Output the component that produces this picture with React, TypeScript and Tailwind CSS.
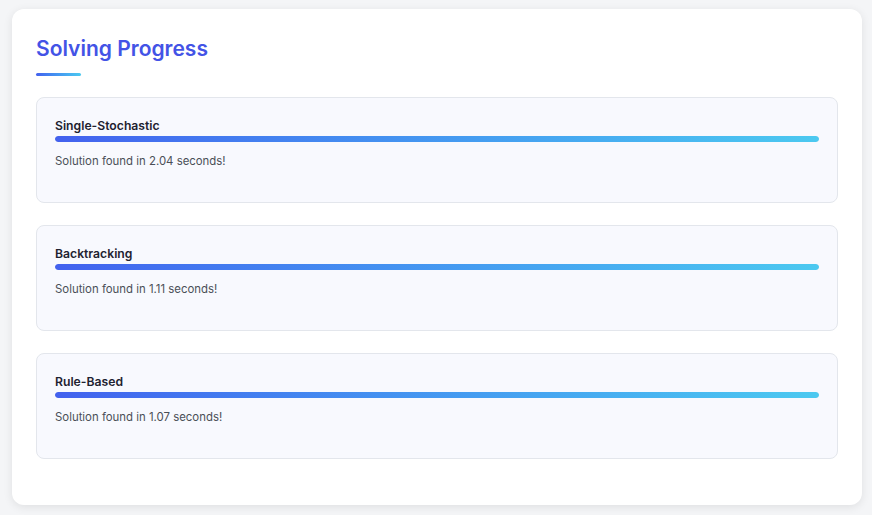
const RESULTS = [
  { name: "Single-Stochastic", time: "2.04" },
  { name: "Backtracking", time: "1.11" },
  { name: "Rule-Based", time: "1.07" },
];

function ResultBox({ name, time }: { name: string; time: string }) {
  return (
    <div className="h-[106px] mb-[22px] rounded-lg border border-[#e3e6ec] bg-[#f8f9fe] px-[18px] pt-[19px]">
      <h3 className="text-[12.2px] leading-[18px] font-semibold text-[#1e2230]">{name}</h3>
      <div className="mt-px h-[6px] w-full rounded-full bg-[#e9ecef] overflow-hidden">
        <div
          className="h-full rounded-full bg-gradient-to-r from-[#4361ee] to-[#4cc9f0]"
          style={{ width: "100%" }}
        />
      </div>
      <p className="mt-[10px] text-[11.4px] leading-[18px] text-[#4a4f57]">
        Solution found in {time} seconds!
      </p>
    </div>
  );
}

export default function App() {
  return (
    <div
      className="min-h-[515px] bg-[#f4f5f7] pl-[12px] pr-[10px] pt-[9px] pb-[11px]"
      style={{ fontFamily: "Inter, 'Noto Sans', sans-serif" }}
    >
      <div className="rounded-xl bg-white px-[24px] pt-[25px] pb-[24px] shadow-[0_2px_10px_rgba(0,0,0,0.09)]">
        {/* Section title */}
        <h2 className="text-[21px] leading-[30px] font-semibold text-[#4353e6]">Solving Progress</h2>
        <div className="mt-[9px] mb-[21px] h-[3px] w-[45px] rounded-full bg-gradient-to-r from-[#4361ee] to-[#4cc9f0]" />

        {RESULTS.map((r) => (
          <ResultBox key={r.name} name={r.name} time={r.time} />
        ))}
      </div>
    </div>
  );
}
